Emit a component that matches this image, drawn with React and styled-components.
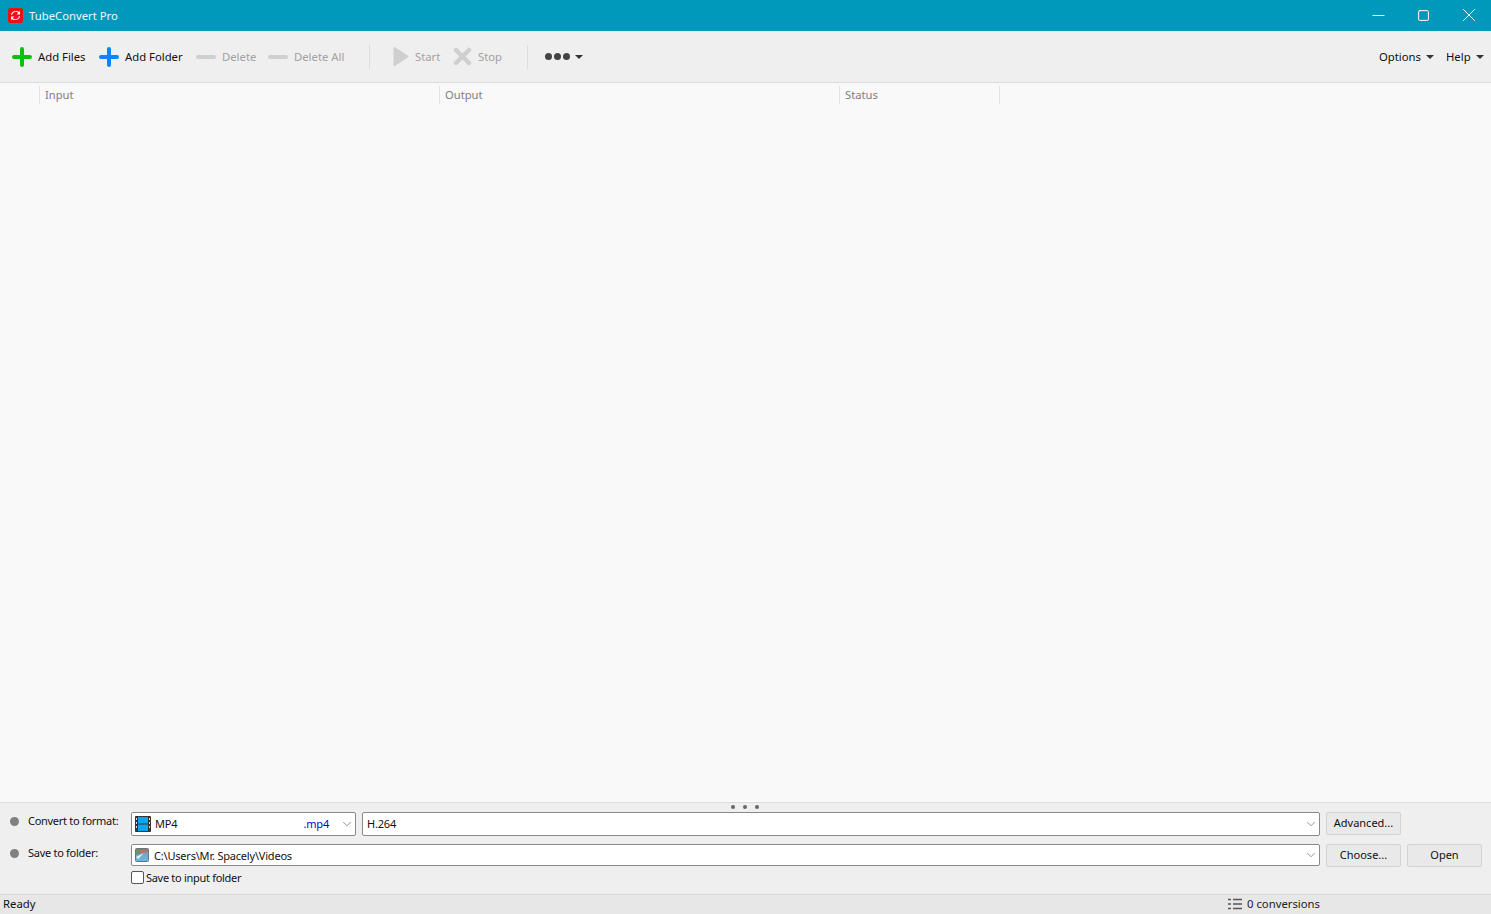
import React from 'react';
import styled, { createGlobalStyle } from 'styled-components';
import { Minus, Square, X, ChevronDown } from 'lucide-react';

const GlobalStyle = createGlobalStyle`
  html, body {
    margin: 0;
    height: 100%;
    overflow: hidden;
  }
  #root {
    height: 100%;
  }
  body {
    font-family: "Noto Sans", "Open Sans", sans-serif;
    font-size: 11.3px;
    color: #111;
  }
`;

const Page = styled.div`
  display: flex;
  flex-direction: column;
  height: 914px;
  background: #f9f9f9;
`;

const TitleBar = styled.div`
  display: flex;
  align-items: center;
  height: 31px;
  flex: none;
  background: #0099bc;
  color: #fff;
`;

const AppLogo = styled.svg`
  width: 15px;
  height: 15px;
  margin-left: 8px;
  margin-right: 6px;
`;

const AppTitle = styled.span`
  flex: 1;
  font-size: 11.3px;
  color: #eef9fc;
`;

const WindowButton = styled.div`
  width: 45px;
  height: 31px;
  box-sizing: border-box;
  padding-bottom: 1px;
  display: flex;
  align-items: center;
  justify-content: center;
  color: #fff;
`;

const Toolbar = styled.div`
  display: flex;
  align-items: center;
  height: 51px;
  flex: none;
  padding-left: 12px;
  padding-right: 7px;
  background: #efefef;
  border-bottom: 1px solid #dcdcdc;
`;

const ToolButton = styled.div`
  display: flex;
  align-items: center;
  gap: ${p => p.$gap ?? 6}px;
  margin-right: ${p => p.$after ?? 13}px;
  font-size: 11.3px;
  color: ${p => (p.$disabled ? '#a2a2a2' : '#111')};
`;

const ToolLabel = styled.span`
  display: block;
  width: ${p => p.$width}px;
  white-space: nowrap;
`;

const ToolSeparator = styled.div`
  width: 1px;
  height: 24px;
  background: #dcdcdc;
  margin-right: ${p => p.$after}px;
`;

const Spacer = styled.div`
  flex: 1;
`;

const Caret = styled.span`
  display: block;
  width: 0;
  height: 0;
  border-left: 4px solid transparent;
  border-right: 4px solid transparent;
  border-top: 4px solid #333;
  margin-top: 1px;
`;

const Dots = styled.div`
  display: flex;
  gap: 2px;
`;

const Dot = styled.span`
  width: 7px;
  height: 7px;
  border-radius: 50%;
  background: #444;
`;

const HeaderRow = styled.div`
  display: flex;
  height: 24px;
  flex: none;
  padding-left: 39px;
`;

const HeaderCell = styled.div`
  width: ${p => p.$width}px;
  height: 18px;
  margin-top: 3px;
  padding-left: 5px;
  box-sizing: border-box;
  border-left: 1px solid #e3e3e3;
  border-right: ${p => (p.$last ? '1px solid #e3e3e3' : 'none')};
  color: #7d7d85;
  font-size: 11.2px;
  line-height: 18px;
`;

const ListArea = styled.div`
  flex: 1;
`;

const BottomPanel = styled.div`
  flex: none;
  height: 92px;
  box-sizing: border-box;
  background: #efefef;
  border-top: 1px solid #dcdcdc;
`;

const Grip = styled.div`
  display: flex;
  justify-content: center;
  gap: 8px;
  height: 9px;
  padding-right: 1px;
  padding-bottom: 2px;
  box-sizing: border-box;
  align-items: center;
`;

const GripDot = styled.span`
  width: 4px;
  height: 4px;
  border-radius: 50%;
  background: #666;
`;

const FormRow = styled.div`
  display: flex;
  align-items: flex-start;
  padding-left: 10px;
  margin-bottom: ${p => p.$after || 0}px;
`;

const Bullet = styled.span`
  width: 9px;
  height: 9px;
  margin-top: 5px;
  margin-right: 9px;
  flex: none;
  border-radius: 50%;
  background: #808080;
`;

const FieldLabel = styled.span`
  width: 103px;
  flex: none;
  font-size: 11px;
  letter-spacing: -0.28px;
  line-height: 18px;
  white-space: nowrap;
`;

const Combo = styled.div`
  display: flex;
  align-items: center;
  flex: ${p => (p.$width ? 'none' : 1)};
  width: ${p => (p.$width ? `${p.$width}px` : 'auto')};
  height: ${p => p.$height}px;
  box-sizing: border-box;
  margin-right: 6px;
  padding-left: ${p => p.$pad || 3}px;
  padding-right: 1px;
  background: #fff;
  border: 1px solid #8a8a8a;
  border-radius: 2px;
  font-size: 11px;
  letter-spacing: -0.2px;
`;

const ComboText = styled.span`
  flex: 1;
  margin-left: ${p => p.$indent || 0}px;
  margin-bottom: ${p => p.$lift || 0}px;
  white-space: nowrap;
`;

const Extension = styled.span`
  color: #0000e0;
  margin-right: 11px;
  margin-bottom: 1px;
`;

const ComboArrow = styled(ChevronDown)`
  width: 14px;
  height: 14px;
  color: #666;
  flex: none;
`;

const Button = styled.div`
  display: flex;
  align-items: center;
  justify-content: center;
  width: 75px;
  height: 23px;
  box-sizing: border-box;
  padding-bottom: 2px;
  flex: none;
  background: #e9e9e9;
  border: 1px solid #d4d4d4;
  border-radius: 2px;
  font-size: 11px;
`;

const ButtonGroup = styled.div`
  display: flex;
  gap: 6px;
  flex: none;
  width: 156px;
  margin-right: 9px;
`;

const CheckRow = styled.label`
  display: flex;
  align-items: center;
  gap: 2px;
  height: 14px;
  margin-top: 3px;
  margin-left: 131px;
  font-size: 11px;
  letter-spacing: -0.3px;
`;

const CheckBox = styled.span`
  width: 13px;
  height: 13px;
  box-sizing: border-box;
  background: #fff;
  border: 1px solid #555;
  border-radius: 2px;
`;

const StatusBar = styled.div`
  display: flex;
  align-items: center;
  height: 20px;
  flex: none;
  box-sizing: border-box;
  padding-left: 3px;
  padding-bottom: 2px;
  background: #e7e7e7;
  border-top: 1px solid #d6d6d6;
`;

const StatusCount = styled.div`
  display: flex;
  align-items: center;
  gap: 5px;
  width: 263px;
  color: #222;
`;

function LogoIcon() {
  return (
    <AppLogo viewBox="0 0 15 15">
      <rect width="15" height="15" rx="2.5" fill="#ee0f16" />
      <path d="M4 7 A3.6 3.6 0 0 1 10.3 5 L8.6 6.4 L12 6.4 L12 3 L11 4 A5 5 0 0 0 3 6.8 Z" fill="#fff" />
      <path d="M11 8 A3.6 3.6 0 0 1 4.7 10 L6.4 8.6 L3 8.6 L3 12 L4 11 A5 5 0 0 0 12 8.2 Z" fill="#fff" />
    </AppLogo>
  );
}

function PlusIcon({ color }) {
  return (
    <svg width="20" height="20" viewBox="0 0 20 20">
      <path d="M10 2 V18 M2 10 H18" stroke={color} strokeWidth="4" strokeLinecap="round" />
    </svg>
  );
}

function BarIcon() {
  return (
    <svg width="20" height="20" viewBox="0 0 20 20">
      <path d="M2 10 H18" stroke="#cfcfcf" strokeWidth="4" strokeLinecap="round" />
    </svg>
  );
}

function PlayIcon() {
  return (
    <svg width="16" height="21" viewBox="0 0 16 21">
      <path d="M1.5 2 L14.5 10.5 L1.5 19 Z" fill="#cfcfcf" stroke="#cfcfcf" strokeWidth="2" strokeLinejoin="round" />
    </svg>
  );
}

function StopIcon() {
  return (
    <svg width="19" height="19" viewBox="0 0 19 19">
      <path d="M3 3 L16 16 M16 3 L3 16" stroke="#cfcfcf" strokeWidth="4.5" strokeLinecap="round" />
    </svg>
  );
}

function FilmIcon() {
  return (
    <svg width="16" height="16" viewBox="0 0 16 16">
      <rect x="0" y="0" width="16" height="16" rx="1" fill="#333" />
      <rect x="3" y="1" width="10" height="6.5" fill="#0aa6ee" />
      <rect x="3" y="8.5" width="10" height="6.5" fill="#0aa6ee" />
      <path d="M1 2 h1 v2 h-1 z M1 6 h1 v2 h-1 z M1 10 h1 v2 h-1 z M14 2 h1 v2 h-1 z M14 6 h1 v2 h-1 z M14 10 h1 v2 h-1 z" fill="#ddd" />
    </svg>
  );
}

function FolderPictureIcon() {
  return (
    <svg width="14" height="14" viewBox="0 0 14 14">
      <defs>
        <linearGradient id="folderSky" x1="0" y1="0" x2="0" y2="1">
          <stop offset="0" stopColor="#6c9bb8" />
          <stop offset="1" stopColor="#6db8e4" />
        </linearGradient>
      </defs>
      <rect x="0.5" y="0.5" width="13" height="13" rx="1" fill="url(#folderSky)" stroke="#66747e" />
      <path d="M1 1 H13 V3.5 L1 7 Z" fill="#6e8f6a" />
      <path d="M4 2.5 H13 V4 L6 5.5 Z" fill="#d9646a" />
      <path d="M1 9 L9 5 L3 11 Z" fill="#e8f2f8" />
    </svg>
  );
}

function ListIcon() {
  return (
    <svg width="14" height="12" viewBox="0 0 14 12">
      <path d="M0 1.5 H3 M5 1.5 H14 M0 6 H3 M5 6 H14 M0 10.5 H3 M5 10.5 H14" stroke="#555" strokeWidth="1.3" />
    </svg>
  );
}

export default function App() {
  return (
    <Page>
      <GlobalStyle />
      <TitleBar>
        <LogoIcon />
        <AppTitle>TubeConvert Pro</AppTitle>
        <WindowButton><Minus size={19} strokeWidth={1} absoluteStrokeWidth /></WindowButton>
        <WindowButton><Square size={13} strokeWidth={1} absoluteStrokeWidth /></WindowButton>
        <WindowButton><X size={22} strokeWidth={1} absoluteStrokeWidth /></WindowButton>
      </TitleBar>

      <Toolbar>
        <ToolButton><PlusIcon color="#0cc00c" /><ToolLabel $width={48}>Add Files</ToolLabel></ToolButton>
        <ToolButton><PlusIcon color="#0a84ff" /><ToolLabel $width={58}>Add Folder</ToolLabel></ToolButton>
        <ToolButton $disabled><BarIcon /><ToolLabel $width={33}>Delete</ToolLabel></ToolButton>
        <ToolButton $disabled $after={25}><BarIcon /><ToolLabel $width={50}>Delete All</ToolLabel></ToolButton>
        <ToolSeparator $after={23} />
        <ToolButton $disabled $after={14}><PlayIcon /><ToolLabel $width={24}>Start</ToolLabel></ToolButton>
        <ToolButton $disabled $after={25}><StopIcon /><ToolLabel $width={24}>Stop</ToolLabel></ToolButton>
        <ToolSeparator $after={17} />
        <ToolButton $gap={5}>
          <Dots><Dot /><Dot /><Dot /></Dots>
          <Caret />
        </ToolButton>
        <Spacer />
        <ToolButton $gap={5} $after={12}><ToolLabel $width={42}>Options</ToolLabel><Caret /></ToolButton>
        <ToolButton $gap={5} $after={0}><ToolLabel $width={25}>Help</ToolLabel><Caret /></ToolButton>
      </Toolbar>

      <HeaderRow>
        <HeaderCell $width={400}>Input</HeaderCell>
        <HeaderCell $width={400}>Output</HeaderCell>
        <HeaderCell $width={161} $last>Status</HeaderCell>
      </HeaderRow>
      <ListArea />

      <BottomPanel>
        <Grip><GripDot /><GripDot /><GripDot /></Grip>
        <FormRow $after={8}>
          <Bullet />
          <FieldLabel>Convert to format:</FieldLabel>
          <Combo $width={225} $height={24}>
            <FilmIcon />
            <ComboText $indent={4} $lift={1}>MP4</ComboText>
            <Extension>.mp4</Extension>
            <ComboArrow strokeWidth={1.2} />
          </Combo>
          <Combo $height={24} $pad={4}>
            <ComboText $lift={1}>H.264</ComboText>
            <ComboArrow strokeWidth={1.2} />
          </Combo>
          <ButtonGroup>
            <Button>Advanced...</Button>
          </ButtonGroup>
        </FormRow>
        <FormRow>
          <Bullet />
          <FieldLabel>Save to folder:</FieldLabel>
          <Combo $height={22}>
            <FolderPictureIcon />
            <ComboText $indent={5}>C:\Users\Mr. Spacely\Videos</ComboText>
            <ComboArrow strokeWidth={1.2} />
          </Combo>
          <ButtonGroup>
            <Button>Choose...</Button>
            <Button>Open</Button>
          </ButtonGroup>
        </FormRow>
        <CheckRow><CheckBox />Save to input folder</CheckRow>
      </BottomPanel>

      <StatusBar>
        <Spacer>Ready</Spacer>
        <StatusCount><ListIcon />0 conversions</StatusCount>
      </StatusBar>
    </Page>
  );
}
